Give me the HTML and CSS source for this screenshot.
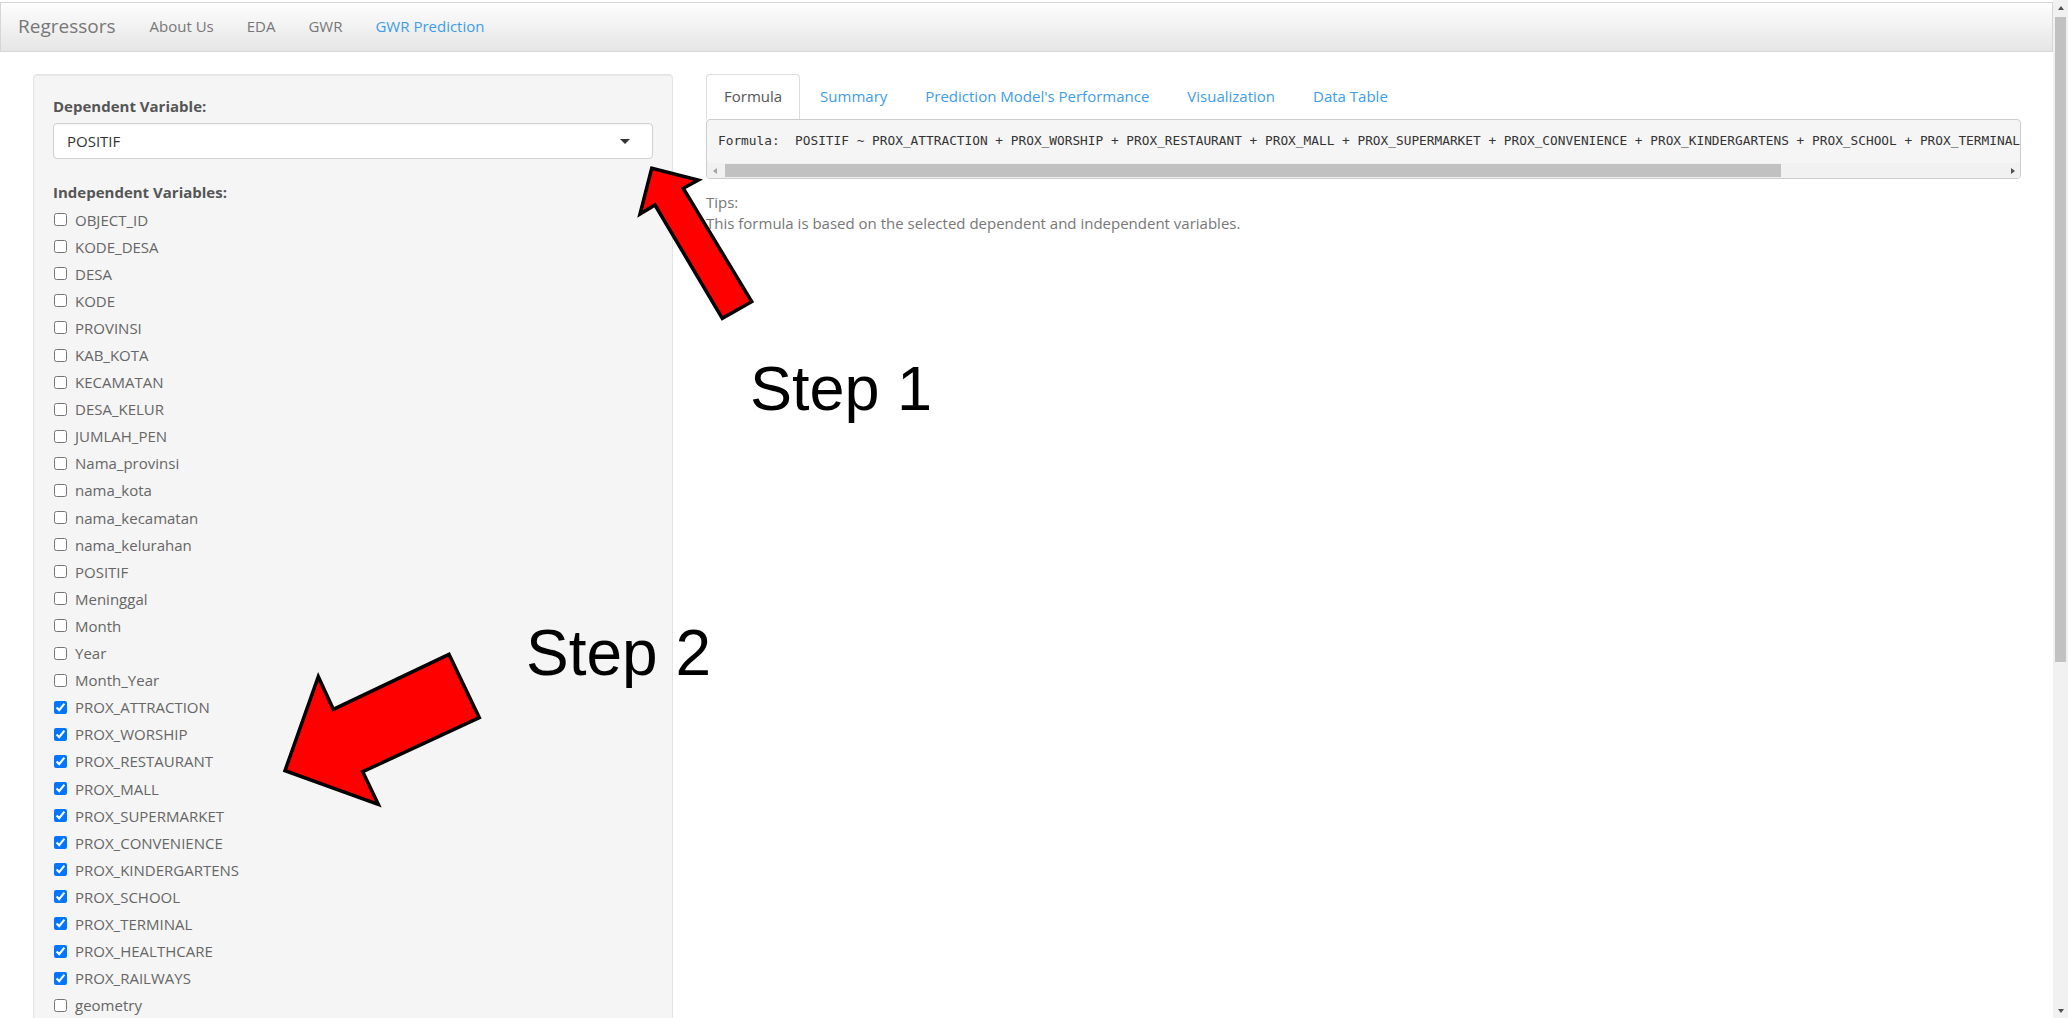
FILE: index.html
```html
<!DOCTYPE html>
<html>
<head>
<meta charset="utf-8">
<title>Regressors</title>
<link rel="stylesheet" href="styles.css">
</head>
<body>
<div class="page">
  <div class="app">
    <nav class="navbar">
      <span class="brand">Regressors</span>
      <ul class="nav">
        <li><a>About Us</a></li>
        <li><a>EDA</a></li>
        <li><a>GWR</a></li>
        <li class="active"><a>GWR Prediction</a></li>
      </ul>
    </nav>
    <div class="content">
      <aside class="well">
        <div class="form-group dep">
          <label class="control-label">Dependent Variable:</label>
          <div class="select"><span>POSITIF</span><span class="caret"></span></div>
        </div>
        <div class="form-group">
          <label class="control-label">Independent Variables:</label>
          <div class="checks">
            <label class="check"><input type="checkbox"><span>OBJECT_ID</span></label>
            <label class="check"><input type="checkbox"><span>KODE_DESA</span></label>
            <label class="check"><input type="checkbox"><span>DESA</span></label>
            <label class="check"><input type="checkbox"><span>KODE</span></label>
            <label class="check"><input type="checkbox"><span>PROVINSI</span></label>
            <label class="check"><input type="checkbox"><span>KAB_KOTA</span></label>
            <label class="check"><input type="checkbox"><span>KECAMATAN</span></label>
            <label class="check"><input type="checkbox"><span>DESA_KELUR</span></label>
            <label class="check"><input type="checkbox"><span>JUMLAH_PEN</span></label>
            <label class="check"><input type="checkbox"><span>Nama_provinsi</span></label>
            <label class="check"><input type="checkbox"><span>nama_kota</span></label>
            <label class="check"><input type="checkbox"><span>nama_kecamatan</span></label>
            <label class="check"><input type="checkbox"><span>nama_kelurahan</span></label>
            <label class="check"><input type="checkbox"><span>POSITIF</span></label>
            <label class="check"><input type="checkbox"><span>Meninggal</span></label>
            <label class="check"><input type="checkbox"><span>Month</span></label>
            <label class="check"><input type="checkbox"><span>Year</span></label>
            <label class="check"><input type="checkbox"><span>Month_Year</span></label>
            <label class="check"><input type="checkbox" checked><span>PROX_ATTRACTION</span></label>
            <label class="check"><input type="checkbox" checked><span>PROX_WORSHIP</span></label>
            <label class="check"><input type="checkbox" checked><span>PROX_RESTAURANT</span></label>
            <label class="check"><input type="checkbox" checked><span>PROX_MALL</span></label>
            <label class="check"><input type="checkbox" checked><span>PROX_SUPERMARKET</span></label>
            <label class="check"><input type="checkbox" checked><span>PROX_CONVENIENCE</span></label>
            <label class="check"><input type="checkbox" checked><span>PROX_KINDERGARTENS</span></label>
            <label class="check"><input type="checkbox" checked><span>PROX_SCHOOL</span></label>
            <label class="check"><input type="checkbox" checked><span>PROX_TERMINAL</span></label>
            <label class="check"><input type="checkbox" checked><span>PROX_HEALTHCARE</span></label>
            <label class="check"><input type="checkbox" checked><span>PROX_RAILWAYS</span></label>
            <label class="check"><input type="checkbox"><span>geometry</span></label>
          </div>
        </div>
      </aside>
      <main class="main">
        <ul class="tabs">
          <li class="active"><a>Formula</a></li>
          <li><a>Summary</a></li>
          <li><a>Prediction Model's Performance</a></li>
          <li><a>Visualization</a></li>
          <li><a>Data Table</a></li>
        </ul>
        <div class="pre">
          <div class="pre-text">Formula:  POSITIF ~ PROX_ATTRACTION + PROX_WORSHIP + PROX_RESTAURANT + PROX_MALL + PROX_SUPERMARKET + PROX_CONVENIENCE + PROX_KINDERGARTENS + PROX_SCHOOL + PROX_TERMINAL + PROX_HEALTHCARE + PROX_RAILWAYS</div>
          <div class="hscroll">
            <span class="arrow-btn"><span class="tri tri-left"></span></span>
            <div class="track"><div class="thumb"></div></div>
            <span class="arrow-btn"><span class="tri tri-right"></span></span>
          </div>
        </div>
        <div class="tips">Tips:<br>This formula is based on the selected dependent and independent variables.</div>
      </main>
    </div>
  </div>
  <div class="vscroll">
    <span class="varrow"><span class="tri tri-up"></span></span>
    <div class="vtrack"><div class="vthumb"></div></div>
    <span class="varrow"><span class="tri tri-down"></span></span>
  </div>

  <svg class="annot" width="2068" height="1018" viewBox="0 0 2068 1018">
    <polygon points="651.7,168.3 698.3,180 683.3,188.3 751.7,301.7 722.3,318.3 655,205 640,214" fill="#ff0000" stroke="#000" stroke-width="3.5" stroke-linejoin="miter"/>
    <polygon points="285,770.7 318.3,676.7 333.3,709.3 449,654.3 479.3,717.7 362.7,771.7 378.3,804.3" fill="#ff0000" stroke="#000" stroke-width="3.5" stroke-linejoin="miter"/>
  </svg>
  <div class="step step1">Step 1</div>
  <div class="step step2">Step 2</div>
</div>
</body>
</html>
```

FILE: styles.css
```css
html, body {
  margin: 0;
  padding: 0;
  background: #fff;
  overflow: hidden;
}
body {
  font-family: "Open Sans", "Noto Sans", sans-serif;
  font-size: 15px;
  line-height: 20px;
  color: #333;
}
ul { list-style: none; margin: 0; padding: 0; }

.page {
  position: relative;
  display: flex;
  width: 2068px;
  height: 1018px;
  overflow: hidden;
}
.app {
  flex: 1;
  min-width: 0;
}

/* navbar */
.navbar {
  margin-top: 2px;
  height: 48px;
  border: 1px solid #d6d6d6;
  background: linear-gradient(to bottom, #fdfdfd 0%, #f3f3f3 45%, #e5e5e5 100%);
  display: flex;
  align-items: center;
  padding-left: 17px;
}
.brand {
  font-size: 19px;
  color: #777;
  line-height: 20px;
  margin-top: -3px;
}
.nav {
  display: flex;
  gap: 33px;
  margin-left: 34px;
  margin-top: -2px;
}
.nav a {
  color: #777;
  line-height: 20px;
}
.nav .active a { color: #3d9de9; }

/* content */
.content {
  display: grid;
  grid-template-columns: 640px 1315px;
  column-gap: 33px;
  padding: 22px 32px 0 33px;
  align-items: start;
}

.well {
  background: #f5f5f5;
  border: 1px solid #e3e3e3;
  border-radius: 4px;
  padding: 21px 19px 60px;
  box-shadow: inset 0 1px 1px rgba(0,0,0,.05);
}
.control-label {
  display: block;
  font-weight: 700;
  color: #555;
  line-height: 20px;
}
.dep .control-label { margin-bottom: 7px; }
.dep { margin-bottom: 23px; }
.select {
  height: 34px;
  background: #fff;
  border: 1px solid #d2d2d2;
  border-radius: 4px;
  display: flex;
  align-items: center;
  justify-content: space-between;
  padding: 0 22px 0 13px;
  color: #333;
  box-shadow: inset 0 1px 1px rgba(0,0,0,.04);
}
.caret {
  width: 0;
  height: 0;
  border-left: 5px solid transparent;
  border-right: 5px solid transparent;
  border-top: 5px solid #333;
}
.checks {
  margin-top: 4px;
}
.check {
  display: flex;
  align-items: center;
  height: 27.1px;
  gap: 8px;
  color: #666;
}
.check input {
  width: 13px;
  height: 13px;
  margin: 0 0 0 1px;
}

/* main */
.tabs {
  display: flex;
}
.tabs li a {
  display: block;
  padding: 11px 17px 13px;
  margin-right: 2px;
  border: 1px solid transparent;
  border-bottom: 0;
  border-radius: 4px 4px 0 0;
  color: #3d9de9;
  line-height: 20px;
}
.tabs li.active a {
  color: #555;
  background: #fff;
  border-color: #dddddd;
}
.pre {
  border: 1px solid #cccccc;
  border-radius: 4px;
  background: #f5f5f5;
  overflow: hidden;
}
.pre-text {
  padding: 10px 11px 12px;
  font-family: "DejaVu Sans Mono", "Liberation Mono", monospace;
  font-size: 12.8px;
  line-height: 21px;
  white-space: pre;
  overflow: hidden;
  color: #333;
}
.hscroll {
  display: flex;
  height: 15px;
  background: #f1f1f1;
}
.arrow-btn {
  width: 15px;
  flex: none;
  display: flex;
  align-items: center;
  justify-content: center;
}
.track {
  flex: 1;
  display: flex;
  align-items: center;
}
.thumb {
  width: 1056px;
  height: 13px;
  margin-left: 3px;
  background: #c1c1c1;
}
.tri { width: 0; height: 0; display: block; }
.tri-left {
  border-top: 3.5px solid transparent;
  border-bottom: 3.5px solid transparent;
  border-right: 4px solid #a3a3a3;
}
.tri-right {
  border-top: 3.5px solid transparent;
  border-bottom: 3.5px solid transparent;
  border-left: 4px solid #505050;
}
.tri-up {
  border-left: 3.5px solid transparent;
  border-right: 3.5px solid transparent;
  border-bottom: 4px solid #505050;
}
.tri-down {
  border-left: 3.5px solid transparent;
  border-right: 3.5px solid transparent;
  border-top: 4px solid #505050;
}
.tips {
  margin-top: 13px;
  line-height: 20.6px;
  color: #777;
}

/* page scrollbar */
.vscroll {
  width: 15px;
  flex: none;
  background: #f1f1f1;
  display: flex;
  flex-direction: column;
}
.varrow {
  height: 15px;
  flex: none;
  display: flex;
  align-items: center;
  justify-content: center;
}
.vtrack {
  flex: 1;
  padding: 2px 2px 0;
}
.vthumb {
  height: 645px;
  background: #c1c1c1;
}

/* annotations */
.annot {
  position: absolute;
  left: 0;
  top: 0;
  pointer-events: none;
}
.step {
  position: absolute;
  font-family: "Liberation Sans", Arial, sans-serif;
  line-height: 1;
  color: #000;
  white-space: nowrap;
}
.step1 {
  font-size: 63px;
  left: 750px;
  top: 357px;
}
.step2 {
  font-size: 64px;
  left: 526px;
  top: 621px;
}
```
